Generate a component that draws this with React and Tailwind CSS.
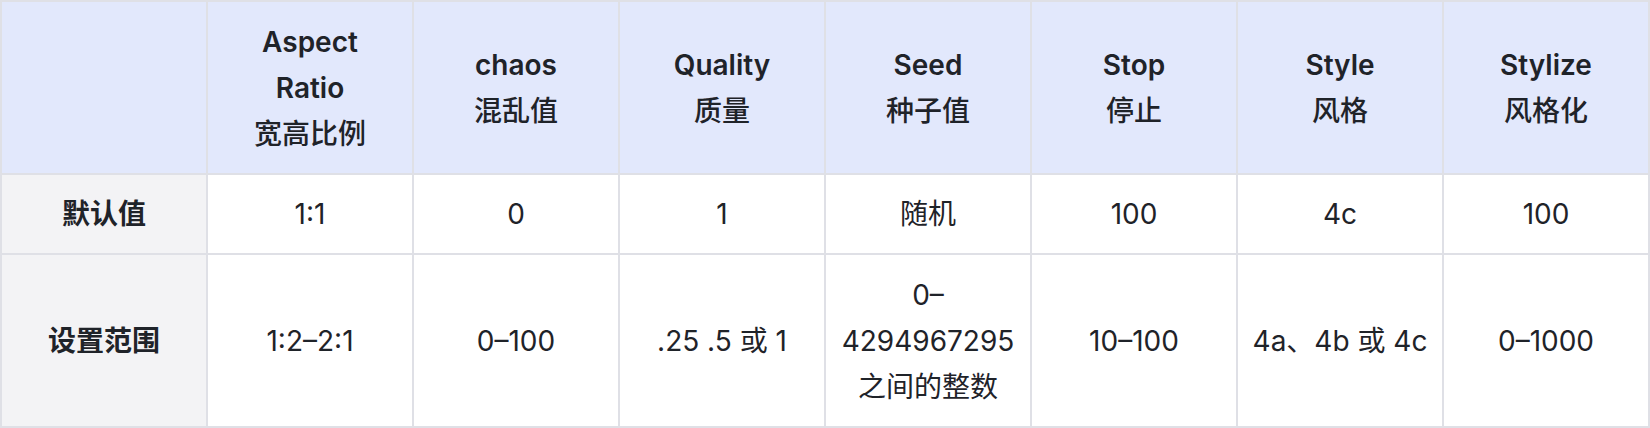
import React from "react";

const font = { fontFamily: 'Inter, "Noto Sans CJK SC", sans-serif' };

const headers = [
  null,
  [["Aspect", "Ratio"], "宽高比例"],
  [["chaos"], "混乱值"],
  [["Quality"], "质量"],
  [["Seed"], "种子值"],
  [["Stop"], "停止"],
  [["Style"], "风格"],
  [["Stylize"], "风格化"],
];

const row1 = ["1:1", "0", "1", "随机", "100", "4c", "100"];
const row2 = [["1:2–2:1"], ["0–100"], [".25 .5 或 1"], ["0–", "4294967295", "之间的整数"], ["10–100"], ["4a、4b 或 4c"], ["0–1000"]];

function Lines({ lines }) {
  return (
    <div>
      {lines.map((l, i) => (
        <div key={i}>{l}</div>
      ))}
    </div>
  );
}

export default function App() {
  return (
    <div
      className="w-[1650px] h-[428px] bg-[#dfe0e6] p-[2px] grid grid-cols-8 grid-rows-[171px_78px_171px] gap-[2px] text-[28px] leading-[46px] text-[#1f2329]"
      style={font}
    >
      {headers.map((h, i) => (
        <div key={"h" + i} className="bg-[#e2e8fc] flex items-center justify-center text-center">
          {h && (
            <div>
              {h[0].map((l, j) => (
                <div key={j} className="font-semibold">{l}</div>
              ))}
              <div className="font-medium">{h[1]}</div>
            </div>
          )}
        </div>
      ))}
      <div className="bg-[#f3f3f5] flex items-center justify-center font-semibold">默认值</div>
      {row1.map((v, i) => (
        <div key={"a" + i} className="bg-white flex items-center justify-center text-center">
          {v}
        </div>
      ))}
      <div className="bg-[#f3f3f5] flex items-center justify-center font-semibold">设置范围</div>
      {row2.map((v, i) => (
        <div key={"b" + i} className="bg-white flex items-center justify-center text-center">
          <Lines lines={v} />
        </div>
      ))}
    </div>
  );
}
